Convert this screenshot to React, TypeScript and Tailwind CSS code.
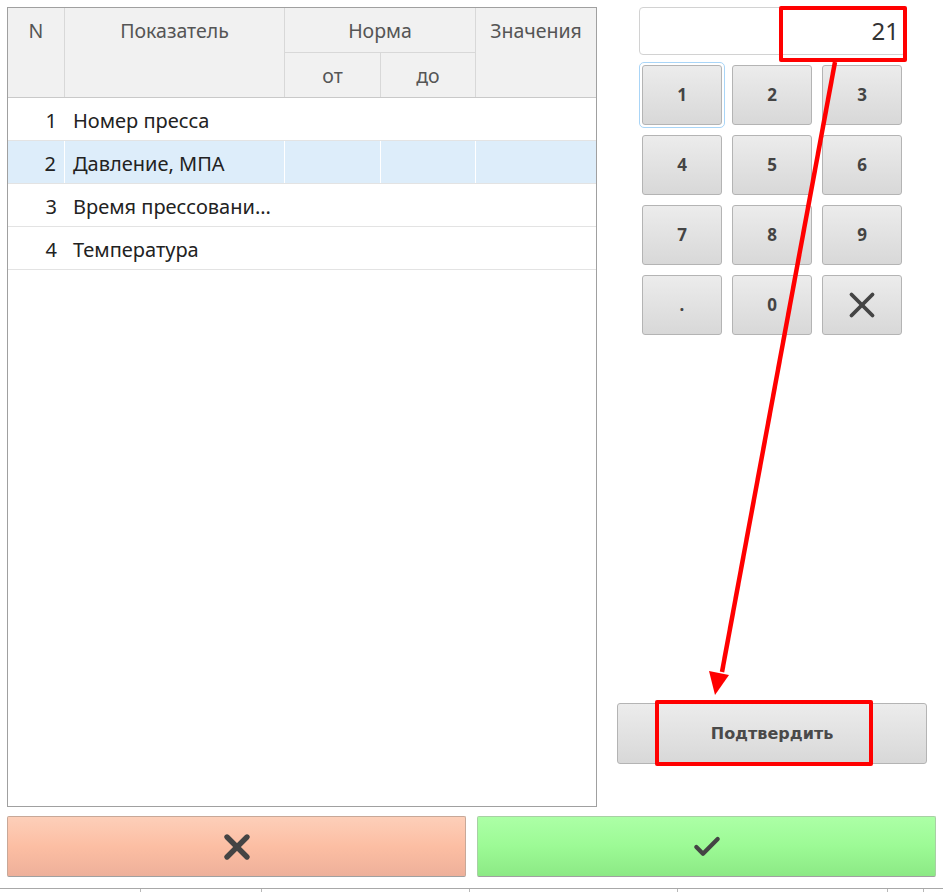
import { X, Check } from "lucide-react";

const rows = [
  { n: 1, name: "Номер пресса" },
  { n: 2, name: "Давление, МПА", active: true },
  { n: 3, name: "Время прессовани..." },
  { n: 4, name: "Температура" },
];

const keys = ["1", "2", "3", "4", "5", "6", "7", "8", "9", ".", "0", "del"];

const KeyButton = ({ k }: { k: string }) => (
  <div className={k === "1" ? "rounded-[2px] outline outline-1 outline-[#a9d5f7] outline-offset-[2px]" : ""}>
    <button className="flex h-[60px] w-[80px] items-center justify-center rounded-[3px] border border-[#b4b4b4] bg-gradient-to-b from-[#ececec] to-[#d8d8d8] text-[17px] font-bold text-[#444]">
      {k === "del" ? <X size={42} strokeWidth={2.2} className="text-[#444]" /> : k}
    </button>
  </div>
);

export default function App() {
  return (
    <div className="relative h-[892px] w-[943px] overflow-hidden bg-white font-['Noto_Sans',sans-serif]">
      <div className="flex pl-[7px] pt-[7px]">
        {/* table */}
        <div className="h-[800px] w-[590px] border border-[#a0a0a0]">
          <div className="flex h-[90px] border-b border-[#c9c9c9] bg-[#f1f1f1] text-[19.5px] text-[#555]">
            <div className="w-[57px] border-r border-[#d8d8d8] pt-[8px] text-center">N</div>
            <div className="w-[220px] border-r border-[#d8d8d8] pt-[8px] text-center">Показатель</div>
            <div className="flex w-[191px] flex-col border-r border-[#d8d8d8]">
              <div className="h-[45px] border-b border-[#d8d8d8] pt-[8px] text-center">Норма</div>
              <div className="flex flex-1">
                <div className="w-[96px] border-r border-[#d8d8d8] pt-[8px] text-center">от</div>
                <div className="flex-1 pt-[8px] text-center">до</div>
              </div>
            </div>
            <div className="flex-1 pt-[8px] text-center">Значения</div>
          </div>
          {rows.map((r) => (
            <div
              key={r.n}
              className={`flex h-[43px] items-center border-b border-[#e3e3e3] text-[20px] text-[#222] ${r.active ? "bg-[#ddedfa]" : ""}`}
            >
              <div className={`h-full w-[57px] pr-[8px] pt-[1px] text-right leading-[44px] ${r.active ? "border-r border-white" : ""}`}>{r.n}</div>
              <div className={`h-full w-[220px] whitespace-nowrap pl-[8px] pt-[1px] leading-[44px] ${r.active ? "border-r border-white" : ""}`}>{r.name}</div>
              <div className={`h-full w-[96px] ${r.active ? "border-r border-white" : ""}`} />
              <div className={`h-full w-[95px] ${r.active ? "border-r border-white" : ""}`} />
              <div className="h-full flex-1" />
            </div>
          ))}
        </div>

        {/* keypad panel */}
        <div className="ml-[20px] flex w-[310px] flex-col">
          <div className="ml-[22px] flex h-[48px] w-[267px] items-center justify-end rounded-[4px] border border-[#d2d2d2] pr-[6px] text-[24px] text-[#333]">
            21
          </div>
          <div className="ml-[25px] mt-[10px] grid grid-cols-[80px_80px_80px] gap-x-[10px] gap-y-[10px]">
            {keys.map((k) => (
              <KeyButton key={k} k={k} />
            ))}
          </div>
          <button className="mt-[368px] flex h-[61px] w-[310px] items-center justify-center rounded-[3px] border border-[#b4b4b4] bg-gradient-to-b from-[#ececec] to-[#d8d8d8] font-['DejaVu_Sans',sans-serif] text-[16px] font-bold text-[#4a4a4a]">
            Подтвердить
          </button>
        </div>
      </div>

      {/* bottom buttons */}
      <div className="mt-[9px] flex gap-[11px] px-[7px]">
        <button className="flex h-[61px] w-[460px] items-center justify-center rounded-[2px] border border-[#c8a898] border-b-[#a0a0a0] bg-gradient-to-b from-[#fdcfb9] via-[#fcbea3] to-[#eeb09a]">
          <X size={40} strokeWidth={3.2} className="text-[#444]" />
        </button>
        <button className="flex h-[61px] w-[460px] items-center justify-center rounded-[2px] border border-[#a8d0a4] border-b-[#a0a0a0] bg-gradient-to-b from-[#acffa6] via-[#9cfa95] to-[#8ce985]">
          <Check size={32} strokeWidth={3.2} className="text-[#444]" />
        </button>
      </div>

      {/* bottom strip */}
      <div className="mt-[11px] flex h-[6px] border-t border-[#a8a8a8]">
        <div className="w-[141px] border-r border-[#b8b8b8]" />
        <div className="w-[121px] border-r border-[#b8b8b8]" />
        <div className="w-[208px] border-r border-[#b8b8b8]" />
        <div className="w-[208px] border-r border-[#b8b8b8]" />
        <div className="w-[210px] border-r border-[#b8b8b8]" />
        <div className="w-[36px] border-r border-[#b8b8b8]" />
      </div>

      {/* annotations */}
      <div className="absolute left-[779px] top-[6px] h-[56px] w-[128px] rounded-[2px] border-[4px] border-[#ff0000]" />
      <div className="absolute left-[655px] top-[700px] h-[66px] w-[218px] rounded-[2px] border-[4px] border-[#ff0000]" />
      <svg className="absolute left-0 top-0" width="943" height="892">
        <line x1="835" y1="62" x2="722" y2="672" stroke="#ff0000" strokeWidth="4.5" />
        <polygon points="715,695 709,671 729,675" fill="#ff0000" />
      </svg>
    </div>
  );
}
